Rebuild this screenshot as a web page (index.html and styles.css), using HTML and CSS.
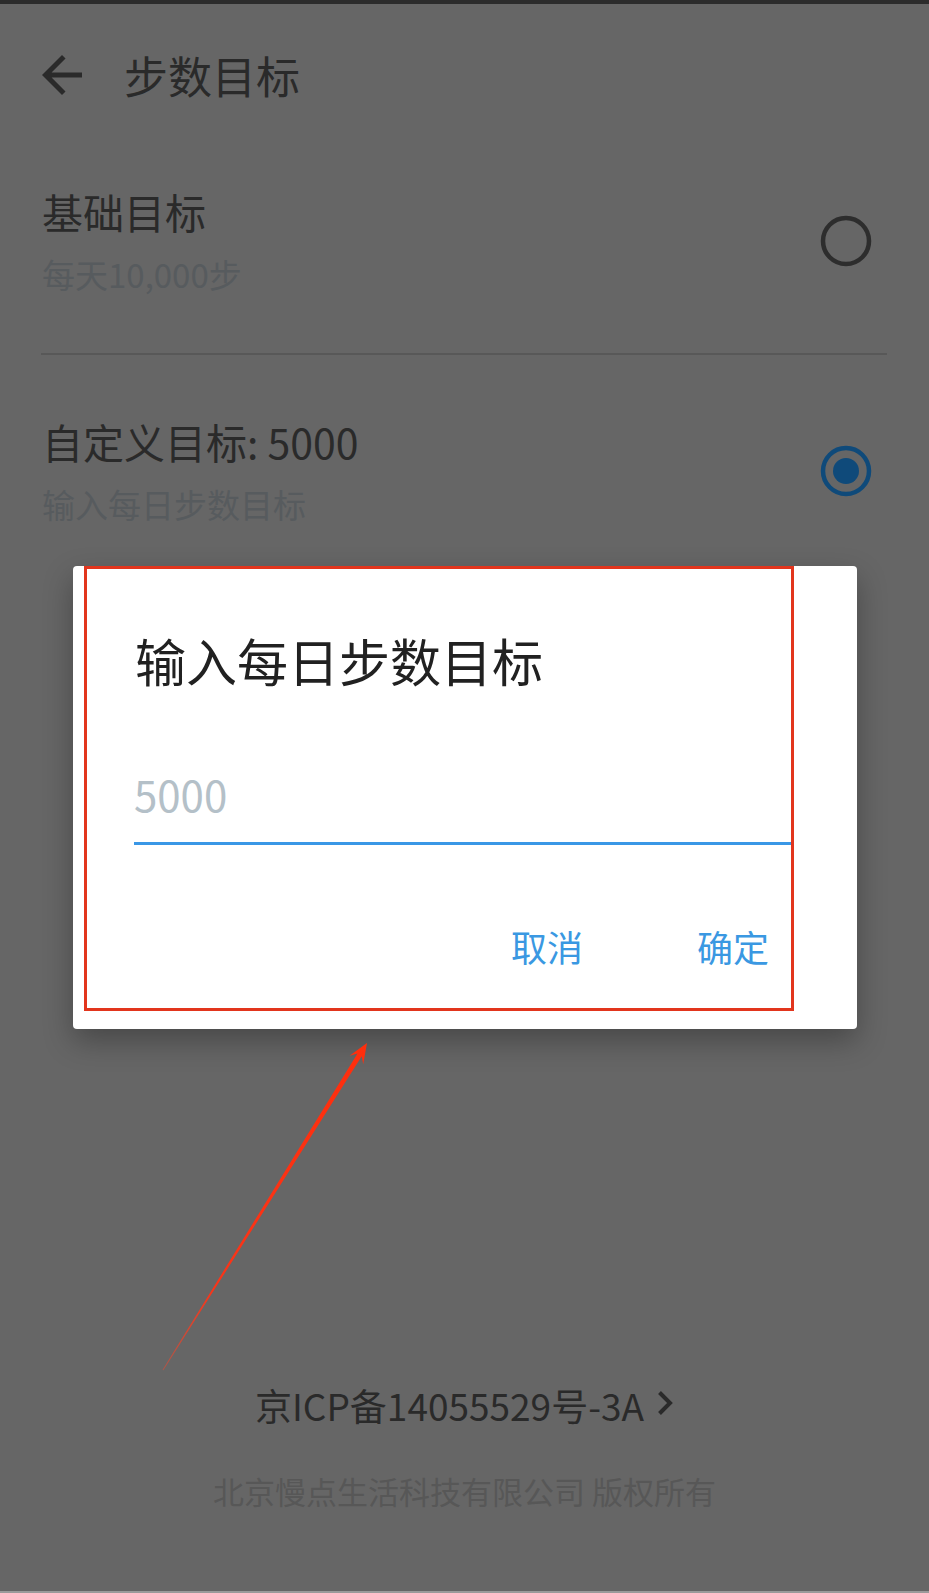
FILE: index.html
```html
<!DOCTYPE html>
<html lang="zh-CN">
<head>
<meta charset="utf-8">
<title>步数目标</title>
<link rel="stylesheet" href="styles.css">
</head>
<body>
<div class="page">
  <div class="status-strip"></div>
  <header class="toolbar">
    <svg class="back" viewBox="0 0 24 24" width="60" height="60"><path d="M20 11H7.83l5.59-5.59L12 4l-8 8 8 8 1.41-1.41L7.83 13H20v-2z"/></svg>
    <h1 class="toolbar-title">步数目标</h1>
  </header>

  <div class="option option-first">
    <div class="option-text">
      <div class="option-title">基础目标</div>
      <div class="option-sub">每天10,000步</div>
    </div>
    <svg class="radio" viewBox="0 0 52 52" width="52" height="52"><circle cx="26" cy="26" r="23" fill="none" stroke="#2d2d2d" stroke-width="4.5"/></svg>
  </div>
  <div class="divider"></div>
  <div class="option option-second">
    <div class="option-text">
      <div class="option-title">自定义目标: 5000</div>
      <div class="option-sub">输入每日步数目标</div>
    </div>
    <svg class="radio" viewBox="0 0 52 52" width="52" height="52"><circle cx="26" cy="26" r="23" fill="none" stroke="#0f4a7a" stroke-width="4.5"/><circle cx="26" cy="26" r="13" fill="#0f4a7a"/></svg>
  </div>

  <footer class="footer">
    <div class="icp">
      <span>京ICP备14055529号-3A</span>
      <svg class="chev" viewBox="0 0 18 28" width="18" height="28"><path d="M3.5 3.5l10.5 10.5-10.5 10.5" fill="none" stroke="#2a2a2a" stroke-width="4"/></svg>
    </div>
    <div class="copyright">北京慢点生活科技有限公司 版权所有</div>
  </footer>
  <div class="bottom-strip"></div>
</div>

<div class="dialog">
  <div class="dialog-title">输入每日步数目标</div>
  <div class="dialog-input"><span class="placeholder">5000</span></div>
  <div class="dialog-actions">
    <span class="btn">取消</span>
    <span class="btn">确定</span>
  </div>
</div>

<div class="annot-rect"></div>
<svg class="annot-arrow" viewBox="0 0 929 1593" width="929" height="1593">
  <defs>
    <linearGradient id="fade" x1="163" y1="1370" x2="367" y2="1043" gradientUnits="userSpaceOnUse">
      <stop offset="0" stop-color="#f4452a" stop-opacity="0.5"/>
      <stop offset="0.25" stop-color="#fa3418"/>
      <stop offset="1" stop-color="#ff2e0c"/>
    </linearGradient>
  </defs>
  <polygon fill="url(#fade)" points="367,1043 363.2,1064.2 361.7,1056.2 163.4,1370.3 162.6,1369.7 357.5,1053.6 349.6,1055.8"/>
</svg>
</body>
</html>
```

FILE: styles.css
```css
html, body {
  margin: 0;
  padding: 0;
}
body {
  width: 929px;
  height: 1593px;
  overflow: hidden;
  position: relative;
  background: #666666;
  font-family: "Noto Sans CJK SC", "Noto Sans", sans-serif;
  color: #2a2a2a;
}
.page {
  height: 1593px;
  display: flex;
  flex-direction: column;
}
.status-strip {
  height: 4px;
  background: #2c2c2c;
}
.toolbar {
  height: 142px;
  display: flex;
  align-items: center;
  padding-left: 32px;
}
.back {
  fill: #2a2a2a;
  flex: none;
}
.toolbar-title {
  margin: 0 0 0 32px;
  font-size: 44px;
  font-weight: 400;
  line-height: 60px;
  color: #2a2a2a;
}
.option {
  display: flex;
  align-items: center;
  padding: 0 57px 0 42px;
}
.option-first {
  padding-top: 40px;
  padding-bottom: 57px;
}
.option-second {
  padding-top: 61px;
}
.option-text {
  flex: 1;
}
.option-title {
  font-size: 41px;
  line-height: 50px;
  color: #2a2a2a;
}
.option-sub {
  font-size: 33px;
  line-height: 44px;
  margin-top: 16px;
  color: #575b5e;
}
.radio {
  flex: none;
}
.divider {
  height: 2px;
  margin: 0 42px 0 41px;
  background: #585858;
}
.footer {
  margin-top: auto;
  display: flex;
  flex-direction: column;
  align-items: center;
  padding-bottom: 78px;
}
.icp {
  display: flex;
  align-items: center;
  font-size: 37px;
  line-height: 50px;
  color: #2a2a2a;
}
.chev {
  margin-left: 12px;
  margin-top: -4px;
}
.copyright {
  margin-top: 39px;
  font-size: 31px;
  line-height: 44px;
  color: #575757;
}
.bottom-strip {
  height: 2px;
  background: #9a9a9a;
}
.dialog {
  position: absolute;
  left: 73px;
  top: 566px;
  width: 784px;
  height: 463px;
  box-sizing: border-box;
  padding: 64px 64px 0 61px;
  background: #ffffff;
  border-radius: 4px;
  box-shadow: 0 12px 30px rgba(0, 0, 0, 0.3);
}
.dialog-title {
  font-size: 51px;
  line-height: 60px;
  color: #212121;
  padding-left: 1px;
}
.dialog-input {
  margin-top: 79px;
  font-size: 42px;
  line-height: 50px;
  padding-bottom: 23px;
  border-bottom: 3px solid #3997e6;
}
.placeholder {
  color: #b4c0c8;
}
.dialog-actions {
  margin-top: 76px;
  display: flex;
  justify-content: flex-end;
  gap: 114px;
  padding-right: 24px;
  font-size: 36px;
  line-height: 50px;
}
.btn {
  color: #3a98e2;
}
.annot-rect {
  position: absolute;
  left: 84px;
  top: 566px;
  width: 710px;
  height: 445px;
  box-sizing: border-box;
  border: 3px solid #e2351d;
}
.annot-arrow {
  position: absolute;
  left: 0;
  top: 0;
  pointer-events: none;
}
```
